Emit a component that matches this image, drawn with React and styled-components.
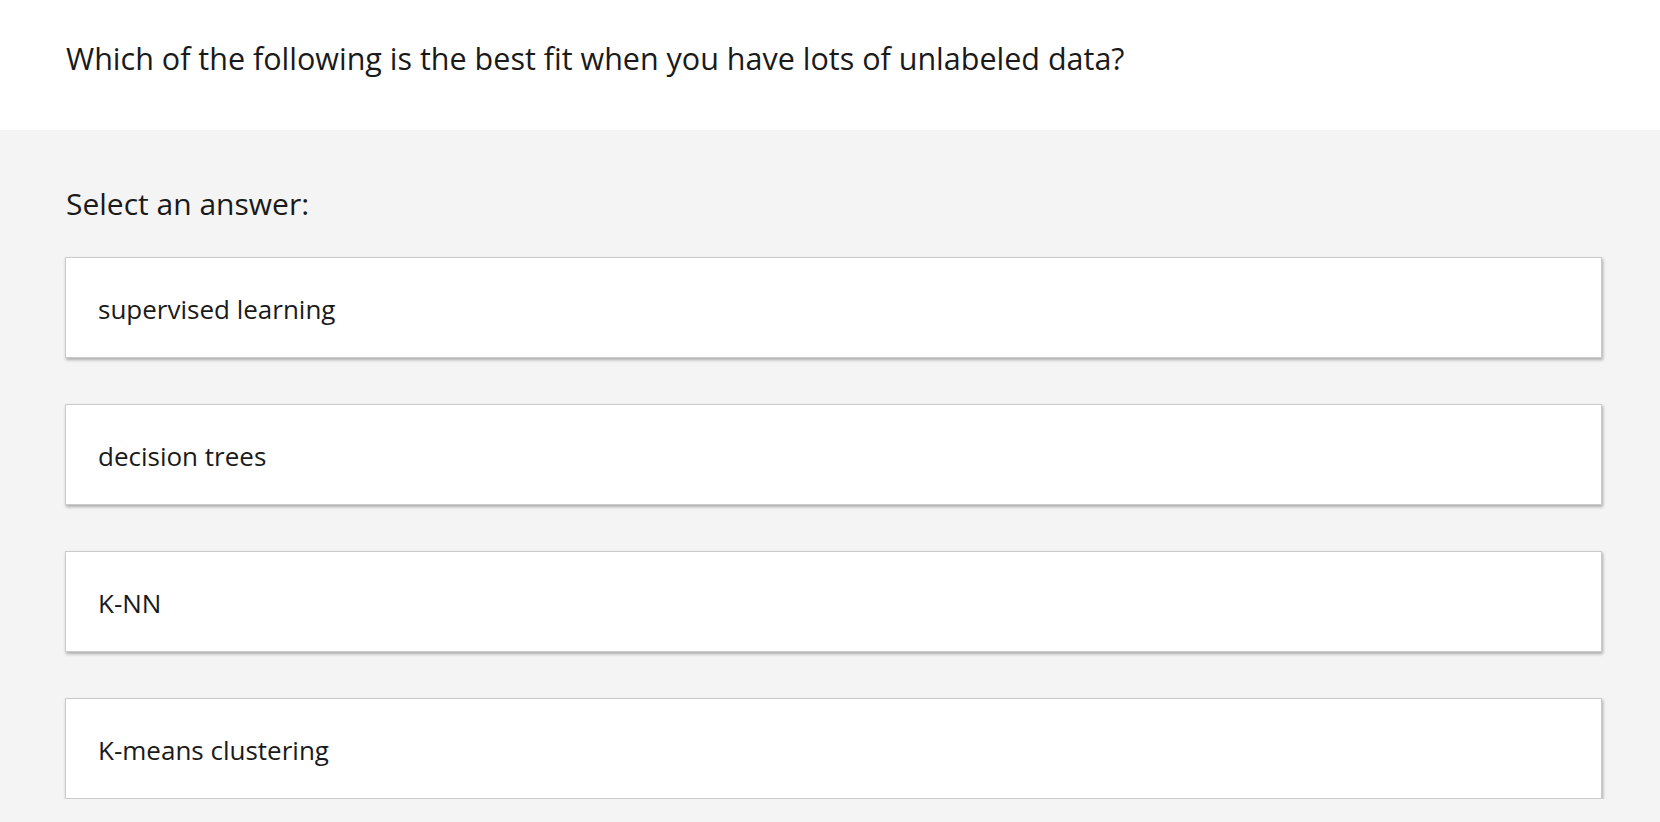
import React from 'react';
import styled, { createGlobalStyle } from 'styled-components';

const GlobalStyle = createGlobalStyle`
    html, body {
        margin: 0;
        padding: 0;
        background: #f4f4f4;
    }
    body {
        font-family: 'Open Sans', 'Noto Sans', sans-serif;
        color: #1a1a1a;
    }
`;

const Header = styled.header`
    background: #fff;
    height: 130px;
    display: flex;
    align-items: center;
    padding: 0 66px;
    box-sizing: border-box;
`;

const Question = styled.h1`
    margin: 0;
    font-size: 30.5px;
    font-weight: 400;
    transform: translateY(-7px);
`;

const Body = styled.main`
    padding: 53px 58px 0 65px;
`;

const Prompt = styled.h2`
    margin: 0 0 33px 1px;
    font-size: 30px;
    font-weight: 400;
`;

const Options = styled.div`
    display: flex;
    flex-direction: column;
    gap: 46px;
`;

const Option = styled.button`
    display: flex;
    align-items: center;
    height: 101px;
    padding: 2px 32px 0;
    background: #fff;
    border: 1px solid #cbcbcb;
    box-shadow: 1px 2px 3px rgba(0, 0, 0, 0.3);
    font-family: inherit;
    font-size: 26px;
    color: #1a1a1a;
    text-align: left;
    cursor: pointer;
    box-sizing: border-box;
    width: 100%;
`;

const answers = ['supervised learning', 'decision trees', 'K-NN', 'K-means clustering'];

export default function App() {
    return (
        <>
            <GlobalStyle />
            <Header>
                <Question>Which of the following is the best fit when you have lots of unlabeled data?</Question>
            </Header>
            <Body>
                <Prompt>Select an answer:</Prompt>
                <Options>
                    {answers.map((a) => (
                        <Option key={a}>{a}</Option>
                    ))}
                </Options>
            </Body>
        </>
    );
}
